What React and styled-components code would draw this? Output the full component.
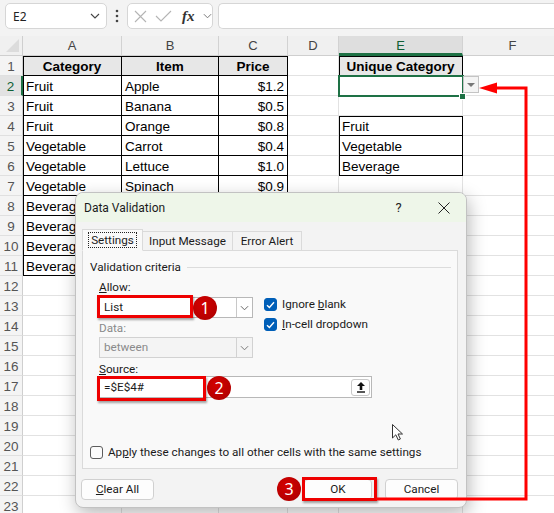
import React from 'react';
import styled, { createGlobalStyle, css } from 'styled-components';

const GlobalStyle = createGlobalStyle`
  html, body { margin: 0; padding: 0; background: #fff; overflow: hidden; }
  * { box-sizing: border-box; }
`;

const COLS = ['A', 'B', 'C', 'D', 'E', 'F'];
const ROWS = Array.from({ length: 23 }, (_, i) => i + 1);

const data = {
  A1: 'Category', B1: 'Item', C1: 'Price', E1: 'Unique Category',
  A2: 'Fruit', B2: 'Apple', C2: '$1.2',
  A3: 'Fruit', B3: 'Banana', C3: '$0.5',
  A4: 'Fruit', B4: 'Orange', C4: '$0.8',
  A5: 'Vegetable', B5: 'Carrot', C5: '$0.4',
  A6: 'Vegetable', B6: 'Lettuce', C6: '$1.0',
  A7: 'Vegetable', B7: 'Spinach', C7: '$0.9',
  A8: 'Beverage', A9: 'Beverage', A10: 'Beverage', A11: 'Beverage',
  E4: 'Fruit', E5: 'Vegetable', E6: 'Beverage',
};

const isBoxed = (c, r) =>
  (['A', 'B', 'C'].includes(c) && r <= 11) || (c === 'E' && (r === 1 || (r >= 4 && r <= 6)));

const Page = styled.div`
  position: relative;
  width: 554px;
  height: 513px;
  overflow: hidden;
  background: #fff;
`;

/* ---------- formula bar ---------- */

const TopBar = styled.div`
  height: 36px;
  background: #f3f3f3;
  display: flex;
  align-items: flex-start;
  padding: 3px 0 0 5px;
  font-family: "Noto Sans", sans-serif;
`;

const NameBox = styled.div`
  width: 102px;
  height: 26px;
  background: #fff;
  border: 1px solid #d6d6d6;
  border-radius: 5px;
  display: flex;
  align-items: center;
  justify-content: space-between;
  padding: 0 6px 0 7px;
  font-size: 12px;
  color: #222;
`;

const Kebab = styled.div`
  width: 20px;
  height: 26px;
  display: flex;
  align-items: center;
  justify-content: center;
`;

const FxGroup = styled.div`
  width: 86px;
  height: 26px;
  background: #fff;
  border: 1px solid #d6d6d6;
  border-radius: 5px;
  display: flex;
  align-items: center;
  padding: 0 0 0 6px;
  gap: 8px;
`;

const Fx = styled.span`
  font-family: "Liberation Serif", serif;
  font-style: italic;
  font-weight: 700;
  font-size: 15px;
  color: #333;
  margin-left: 2px;
`;

const FormulaInput = styled.div`
  flex: 1;
  margin-left: 5px;
  height: 26px;
  background: #fff;
  border: 1px solid #d6d6d6;
  border-right: none;
  border-radius: 5px 0 0 5px;
`;

/* ---------- grid ---------- */

const Sheet = styled.div`
  display: grid;
  grid-template-columns: 23px 99px 97px 69px 51px 124px 100px;
  grid-auto-rows: 20px;
  font-family: "Liberation Sans", Arial, sans-serif;
`;

const Corner = styled.div`
  background: #f0f0f0;
  border-right: 1px solid #cfcfcf;
  border-bottom: 1px solid #cfcfcf;
  display: flex;
  align-items: flex-end;
  justify-content: flex-end;
  padding: 0 3px 3px 0;

  &::after {
    content: '';
    width: 0;
    height: 0;
    border-left: 13px solid transparent;
    border-bottom: 13px solid #dcdcdc;
  }
`;

const ColHead = styled.div`
  background: ${p => (p.$active ? '#dedede' : '#f0f0f0')};
  border-right: 1px solid #d2d2d2;
  border-bottom: ${p => (p.$active ? '3px solid #1e7145' : '1px solid #cfcfcf')};
  text-align: center;
  font-size: 13px;
  line-height: 19px;
  color: ${p => (p.$active ? '#0f5f35' : '#444')};
`;

const RowHead = styled.div`
  background: ${p => (p.$active ? '#e2e2e2' : '#f4f4f4')};
  border-right: ${p => (p.$active ? '2px solid #1e7145' : '1px solid #cfcfcf')};
  border-bottom: 1px solid #e0e0e0;
  text-align: center;
  font-size: 13.5px;
  padding-top: 3px;
  line-height: 16px;
  color: ${p => (p.$active ? '#0f5f35' : '#555')};
`;

const Cell = styled.div`
  position: relative;
  border-right: 1px solid ${p => (p.$boxed ? '#000' : '#e2e2e2')};
  border-bottom: 1px solid ${p => (p.$boxed ? '#000' : '#e2e2e2')};
  box-shadow: ${p =>
    [p.$edgeL && 'inset 1px 0 0 #000', p.$edgeT && 'inset 0 1px 0 #000'].filter(Boolean).join(', ') || 'none'};
  background: ${p => (p.$head ? '#e7e7e7' : '#fff')};
  padding: 3px 3px 0 3px;
  font-size: 13.5px;
  line-height: 16px;
  font-weight: ${p => (p.$head ? 700 : 400)};
  text-align: ${p => p.$align};
  white-space: nowrap;
  overflow: hidden;
  color: #000;

  ${p => p.$selected && css`
    overflow: visible;
    outline: 2px solid #1e7145;
    outline-offset: -1px;
    z-index: 2;

    &::after {
      content: '';
      position: absolute;
      right: -3px;
      bottom: -4px;
      width: 5px;
      height: 5px;
      background: #1e7145;
      outline: 1px solid #fff;
    }
  `}
`;

const DropButton = styled.div`
  position: absolute;
  left: 100%;
  top: 0;
  margin-left: 1px;
  width: 16px;
  height: 17px;
  background: #f4f4f4;
  border: 1px solid #c4c4c4;
  display: flex;
  align-items: center;
  justify-content: center;

  &::before {
    content: '';
    border-left: 4px solid transparent;
    border-right: 4px solid transparent;
    border-top: 4px solid #777;
  }
`;

/* ---------- dialog ---------- */

const Dialog = styled.div`
  position: absolute;
  left: 75px;
  top: 192px;
  width: 392px;
  height: 316px;
  background: #f3f3f3;
  border: 1px solid #c2c2c2;
  border-radius: 8px;
  box-shadow: 2px 6px 18px rgba(0, 0, 0, 0.28);
  display: flex;
  flex-direction: column;
  overflow: hidden;
  font-family: Roboto, "Noto Sans", sans-serif;
  font-size: 11.7px;
  color: #1b1b1b;
`;

const TitleBar = styled.div`
  height: 29px;
  background: #eef6e9;
  display: flex;
  align-items: center;
  padding-left: 8px;
  font-size: 12px;
`;

const Title = styled.div`
  flex: 1;
`;

const TitleButton = styled.div`
  width: 45px;
  display: flex;
  justify-content: center;
  font-size: 13px;
  color: #222;
`;

const Body = styled.div`
  flex: 1;
  display: flex;
  flex-direction: column;
  padding: 7px 8px 0 6px;
`;

const Tabs = styled.div`
  display: flex;
  align-items: flex-end;
  height: 22px;
  position: relative;
  z-index: 1;
  margin-bottom: -1px;
`;

const Tab = styled.div`
  width: ${p => p.$w}px;
  height: ${p => (p.$active ? '22px' : '20px')};
  padding-top: ${p => (p.$active ? '2px' : '1px')};
  text-align: center;
  border: 1px solid #dadada;
  border-bottom: ${p => (p.$active ? '1px solid #f9f9f9' : '1px solid #dadada')};
  border-left: ${p => (p.$first ? '1px solid #dadada' : 'none')};
  background: ${p => (p.$active ? '#f9f9f9' : '#f3f3f3')};
  line-height: 16px;
`;

const Focus = styled.span`
  display: inline-block;
  border: 1px dotted #222;
  padding: 0 2px;
  line-height: 14px;
`;

const Panel = styled.div`
  height: 219px;
  background: #f9f9f9;
  border: 1px solid #dadada;
  padding: 8px 6px 0 7px;
  display: flex;
  flex-direction: column;
`;

const Legend = styled.div`
  display: flex;
  align-items: center;
  height: 16px;
  gap: 6px;

  &::after {
    content: '';
    flex: 1;
    height: 1px;
    background: #dcdcdc;
  }
`;

const Criteria = styled.div`
  display: flex;
  gap: 11px;
  margin-left: 9px;
  margin-top: 5px;
`;

const Fields = styled.div`
  width: 154px;
  display: flex;
  flex-direction: column;
`;

const FieldLabel = styled.div`
  height: 14px;
  line-height: 14px;
  margin-top: ${p => p.$mt || 0}px;
  margin-left: ${p => p.$ml || 0}px;
  color: ${p => (p.$disabled ? '#8a8a8a' : '#1b1b1b')};
`;

const Combo = styled.div`
  margin-top: ${p => p.$mt || 0}px;
  height: 21px;
  display: flex;
  align-items: stretch;
  background: ${p => (p.$disabled ? '#f4f4f4' : '#fff')};
  border: 1px solid ${p => (p.$disabled ? '#d2d2d2' : '#b8b8b8')};
  color: ${p => (p.$disabled ? '#8a8a8a' : '#1b1b1b')};
`;

const ComboText = styled.div`
  flex: 1;
  padding-left: 4px;
  line-height: 19px;
`;

const ComboArrow = styled.div`
  width: 16px;
  border-left: 1px solid ${p => (p.$disabled ? '#d2d2d2' : '#c8c8c8')};
  display: flex;
  align-items: center;
  justify-content: center;
`;

const Checks = styled.div`
  display: flex;
  flex-direction: column;
  gap: 7px;
  padding-top: 18px;
`;

const CheckRow = styled.div`
  display: flex;
  align-items: center;
  gap: 5px;
  height: 13px;
  line-height: 13px;
  white-space: nowrap;
  margin: ${p => p.$m || 0};
`;

const Box = styled.span`
  width: 13px;
  height: 13px;
  border-radius: 3px;
  display: inline-flex;
  align-items: center;
  justify-content: center;
  background: ${p => (p.$checked ? '#005fb8' : '#fbfbfb')};
  border: 1px solid ${p => (p.$checked ? '#005fb8' : '#5c5c5c')};
  flex: none;
`;

const SourceInput = styled.div`
  margin: 0 0 0 9px;
  width: 273px;
  height: 22px;
  background: #fff;
  border: 1px solid #b8b8b8;
  display: flex;
  align-items: center;
  padding: 0 1px 0 4px;
`;

const RefButton = styled.div`
  margin-left: auto;
  width: 19px;
  height: 17px;
  border: 1px solid #c8c8c8;
  border-radius: 3px;
  background: #fff;
  display: flex;
  align-items: center;
  justify-content: center;
`;

const Footer = styled.div`
  display: flex;
  align-items: center;
  margin-top: 10px;
  gap: 13px;
`;

const Button = styled.div`
  width: ${p => p.$w}px;
  height: 21px;
  margin-left: ${p => p.$ml || 0}px;
  background: #fdfdfd;
  border: 1px solid #d0d0d0;
  border-radius: 4px;
  text-align: center;
  line-height: 19px;
`;

/* ---------- annotations ---------- */

const Marker = styled.div`
  position: absolute;
  left: ${p => p.$x}px;
  top: ${p => p.$y}px;
  width: ${p => p.$w}px;
  height: ${p => p.$h}px;
  border: 3px solid #ee0000;
  box-shadow: 1px 2px 2px rgba(0, 0, 0, 0.35);
  pointer-events: none;
`;

const Badge = styled.div`
  position: absolute;
  left: ${p => p.$x - 12}px;
  top: ${p => p.$y - 12}px;
  width: 24px;
  height: 24px;
  border-radius: 50%;
  background: radial-gradient(circle at 40% 35%, #d40000, #a80000);
  color: #fff;
  font-family: "Noto Sans", sans-serif;
  font-size: 16px;
  line-height: 24px;
  text-align: center;
`;

const Overlay = styled.svg`
  position: absolute;
  left: 0;
  top: 0;
  pointer-events: none;
`;

const Chevron = ({ color = '#555', w = 10 }) => (
  <svg width={w} height="6" viewBox="0 0 10 6">
    <path d="M1 1 L5 5 L9 1" fill="none" stroke={color} strokeWidth="1.1" />
  </svg>
);

const Check = () => (
  <svg width="9" height="8" viewBox="0 0 9 8">
    <path d="M1 4.2 L3.4 6.5 L8 1.3" fill="none" stroke="#fff" strokeWidth="1.4" />
  </svg>
);

function Grid() {
  const cells = [<Corner key="corner" />];
  COLS.forEach(c => cells.push(<ColHead key={`h${c}`} $active={c === 'E'}>{c}</ColHead>));
  ROWS.forEach(r => {
    cells.push(<RowHead key={`r${r}`} $active={r === 2}>{r}</RowHead>);
    COLS.forEach(c => {
      const boxed = isBoxed(c, r);
      const id = `${c}${r}`;
      cells.push(
        <Cell
          key={id}
          $boxed={boxed}
          $edgeL={boxed && (c === 'A' || c === 'E')}
          $edgeT={boxed && (r === 1 || id === 'E4')}
          $head={boxed && r === 1}
          $align={r === 1 && boxed ? 'center' : c === 'C' ? 'right' : 'left'}
          $selected={id === 'E2'}
        >
          {data[id]}
          {id === 'E2' && <DropButton />}
        </Cell>
      );
    });
  });
  return <Sheet>{cells}</Sheet>;
}

export default function App() {
  return (
    <Page>
      <GlobalStyle />
      <TopBar>
        <NameBox>
          <span>E2</span>
          <Chevron color="#444" />
        </NameBox>
        <Kebab>
          <svg width="4" height="14" viewBox="0 0 4 14">
            <circle cx="2" cy="2" r="1.3" fill="#444" />
            <circle cx="2" cy="7" r="1.3" fill="#444" />
            <circle cx="2" cy="12" r="1.3" fill="#444" />
          </svg>
        </Kebab>
        <FxGroup>
          <svg width="13" height="13" viewBox="0 0 13 13">
            <path d="M1 1 L12 12 M12 1 L1 12" stroke="#b4b4b4" strokeWidth="1.1" />
          </svg>
          <svg width="17" height="12" viewBox="0 0 17 12">
            <path d="M1 6 L6 11 L16 1" fill="none" stroke="#b4b4b4" strokeWidth="1.1" />
          </svg>
          <Fx>fx</Fx>
          <Chevron color="#777" w={9} />
        </FxGroup>
        <FormulaInput />
      </TopBar>

      <Grid />

      <Dialog>
        <TitleBar>
          <Title>Data Validation</Title>
          <TitleButton>?</TitleButton>
          <TitleButton>
            <svg width="12" height="12" viewBox="0 0 12 12">
              <path d="M0.5 0.5 L11.5 11.5 M11.5 0.5 L0.5 11.5" stroke="#222" strokeWidth="1" />
            </svg>
          </TitleButton>
        </TitleBar>
        <Body>
          <Tabs>
            <Tab $active $first $w={61}><Focus>Settings</Focus></Tab>
            <Tab $w={90}>Input Message</Tab>
            <Tab $w={69}>Error Alert</Tab>
          </Tabs>
          <Panel>
            <Legend>Validation criteria</Legend>
            <Criteria>
              <Fields>
                <FieldLabel><u>A</u>llow:</FieldLabel>
                <Combo $mt={3}>
                  <ComboText>List</ComboText>
                  <ComboArrow><Chevron color="#666" w={9} /></ComboArrow>
                </Combo>
                <FieldLabel $mt={3} $disabled>Data:</FieldLabel>
                <Combo $mt={2} $disabled>
                  <ComboText>between</ComboText>
                  <ComboArrow $disabled><Chevron color="#777" w={9} /></ComboArrow>
                </Combo>
              </Fields>
              <Checks>
                <CheckRow><Box $checked><Check /></Box><span>Ignore <u>b</u>lank</span></CheckRow>
                <CheckRow><Box $checked><Check /></Box><span><u>I</u>n-cell dropdown</span></CheckRow>
              </Checks>
            </Criteria>
            <FieldLabel $mt={4} $ml={9}><u>S</u>ource:</FieldLabel>
            <SourceInput>
              =$E$4#
              <RefButton>
                <svg width="10" height="12" viewBox="0 0 10 12">
                  <path d="M5 1 L9 5 H6.3 V9 H3.7 V5 H1 Z" fill="#111" />
                  <rect x="1" y="10.3" width="8" height="1.4" fill="#111" />
                </svg>
              </RefButton>
            </SourceInput>
            <CheckRow $m="48px 0 0 0">
              <Box />
              <span>Ap<u>p</u>ly these changes to all other cells with the same settings</span>
            </CheckRow>
          </Panel>
          <Footer>
            <Button $w={73} $ml={-1}><u>C</u>lear All</Button>
            <Button $w={68} $ml={137}>OK</Button>
            <Button $w={73}>Cancel</Button>
          </Footer>
        </Body>
      </Dialog>

      <Marker $x={97} $y={295} $w={96} $h={23} />
      <Marker $x={97} $y={376} $w={109} $h={25} />
      <Marker $x={302} $y={477} $w={75} $h={24} />
      <Badge $x={205} $y={308}>1</Badge>
      <Badge $x={219} $y={388}>2</Badge>
      <Badge $x={289} $y={489}>3</Badge>

      <Overlay width="554" height="513" viewBox="0 0 554 513">
        <polyline points="376,499 526,499 526,88 494,88" fill="none" stroke="#ff0000" strokeWidth="3" />
        <polygon points="479,88 497,82.5 497,93.5" fill="#ff0000" />
        <path
          d="M392.5 424.5 L392.5 438 L395.8 434.8 L398.3 440 L400.4 439 L398 434 L402.5 434 Z"
          fill="#fff"
          stroke="#333"
          strokeWidth="1"
        />
      </Overlay>
    </Page>
  );
}
